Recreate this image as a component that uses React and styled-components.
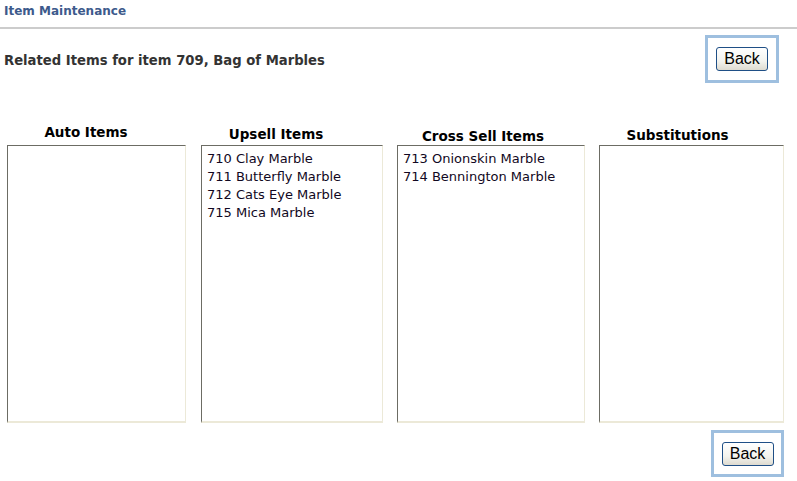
import React from "react";
import styled, { createGlobalStyle } from "styled-components";

const Global = createGlobalStyle`
  html, body { margin: 0; padding: 0; background: #fff; }
  body { font-family: "DejaVu Sans", Verdana, sans-serif; }
`;

const Page = styled.div`
  width: 797px;
  height: 481px;
  display: flex;
  flex-direction: column;
  overflow: hidden;
`;

const Header = styled.div`
  border-bottom: 2px solid #cccccc;
  padding: 3px 0 0 4px;
  box-sizing: border-box;
  height: 29px;
  font-size: 12px;
  font-weight: bold;
  color: #3d5a8c;
  line-height: 16px;
`;

const TitleRow = styled.div`
  display: flex;
  align-items: center;
  justify-content: space-between;
  padding: 6px 18px 0 4px;
`;

const Title = styled.h1`
  margin: 2px 0 0;
  font-size: 13.2px;
  font-weight: bold;
  color: #333333;
`;

const ButtonFrame = styled.div`
  display: flex;
  align-items: center;
  justify-content: center;
  width: ${(p) => p.$w}px;
  height: ${(p) => p.$h}px;
  box-sizing: border-box;
  border: 3px solid #9ebfdf;
`;

const Button = styled.button`
  width: 52px;
  height: 24px;
  padding: 0;
  border: 1px solid #1f4f86;
  border-radius: 3px;
  background: linear-gradient(#ffffff, #f3f3ee 60%, #dedbd0);
  font-family: "Liberation Sans", Arial, sans-serif;
  font-size: 16px;
  color: #000;
  line-height: 20px;
`;

const Columns = styled.div`
  display: flex;
  padding: 40px 0 0 7px;
`;

const Column = styled.div`
  display: flex;
  flex-direction: column;
  width: ${(p) => p.$w}px;
  margin-right: ${(p) => p.$gap}px;
`;

const Heading = styled.div`
  height: 22px;
  text-align: center;
  font-size: 13.5px;
  font-weight: bold;
  color: #000;
  line-height: 18px;
  padding-top: ${(p) => p.$off}px;
  padding-right: ${(p) => p.$shift}px;
  box-sizing: border-box;
`;

const ListBox = styled.div`
  height: 278px;
  box-sizing: border-box;
  border-top: 1px solid #6c6c64;
  border-left: 1px solid #6c6c64;
  border-right: 1px solid #ece9d8;
  border-bottom: 2px solid #ece9d8;
  padding: 4px 5px;
  font-size: 13px;
  line-height: 18px;
  color: #110822;
`;

const Item = styled.div`
  white-space: nowrap;
`;

const Footer = styled.div`
  display: flex;
  justify-content: flex-end;
  padding: 7px 13px 0 0;
`;

const cols = [
  { title: "Auto Items", w: 179, gap: 15, off: 0, shift: 21, items: [] },
  {
    title: "Upsell Items",
    w: 182,
    gap: 14,
    off: 2,
    shift: 32,
    items: ["710 Clay Marble", "711 Butterfly Marble", "712 Cats Eye Marble", "715 Mica Marble"],
  },
  { title: "Cross Sell Items", w: 188, gap: 14, off: 4, shift: 16, items: ["713 Onionskin Marble", "714 Bennington Marble"] },
  { title: "Substitutions", w: 185, gap: 0, off: 3, shift: 28, items: [] },
];

export default function App() {
  return (
    <Page>
      <Global />
      <Header>Item Maintenance</Header>
      <TitleRow>
        <Title>Related Items for item 709, Bag of Marbles</Title>
        <ButtonFrame $w={74} $h={48}>
          <Button>Back</Button>
        </ButtonFrame>
      </TitleRow>
      <Columns>
        {cols.map((c) => (
          <Column key={c.title} $w={c.w} $gap={c.gap}>
            <Heading $off={c.off} $shift={c.shift}>{c.title}</Heading>
            <ListBox>
              {c.items.map((i) => (
                <Item key={i}>{i}</Item>
              ))}
            </ListBox>
          </Column>
        ))}
      </Columns>
      <Footer>
        <ButtonFrame $w={73} $h={47}>
          <Button>Back</Button>
        </ButtonFrame>
      </Footer>
    </Page>
  );
}
